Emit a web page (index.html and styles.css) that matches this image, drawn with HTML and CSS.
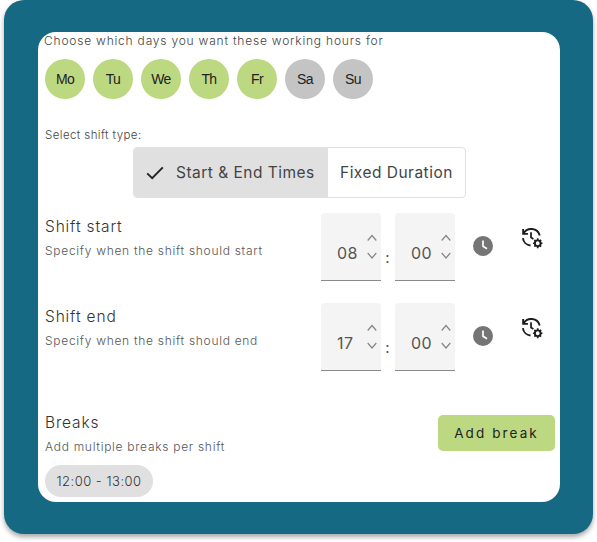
FILE: index.html
```html
<!DOCTYPE html>
<html lang="en">
<head>
<meta charset="utf-8">
<title>Working hours</title>
<link rel="stylesheet" href="styles.css">
</head>
<body>
<main class="panel">
  <section class="card">
    <p class="lead">Choose which days you want these working hours for</p>
    <div class="days">
      <span class="day on">Mo</span><span class="day on">Tu</span><span class="day on">We</span><span class="day on">Th</span><span class="day on">Fr</span><span class="day">Sa</span><span class="day">Su</span>
    </div>
    <p class="label">Select shift type:</p>
    <div class="toggle-wrap">
      <div class="toggle">
        <div class="opt sel">
          <svg class="check" viewBox="0 0 18 14" width="18" height="14"><path d="M1.2 7.4 6.2 12.2 16.8 1.4" fill="none" stroke="#222" stroke-width="1.9"/></svg>
          <span>Start &amp; End Times</span>
        </div>
        <div class="opt">Fixed Duration</div>
      </div>
    </div>
    <div class="shift first">
      <div class="shift-text">
        <h2>Shift start</h2>
        <p class="sub">Specify when the shift should start</p>
      </div>
      <div class="time">
        <div class="field"><span class="val">08</span><span class="spin"><svg viewBox="0 0 10 26" width="10" height="26"><path d="M.7 6.5 5 1.5 9.3 6.5M.7 19 5 24 9.3 19" fill="none" stroke="#858585" stroke-width="1.2"/></svg></span></div>
        <span class="colon">:</span>
        <div class="field"><span class="val">00</span><span class="spin"><svg viewBox="0 0 10 26" width="10" height="26"><path d="M.7 6.5 5 1.5 9.3 6.5M.7 19 5 24 9.3 19" fill="none" stroke="#858585" stroke-width="1.2"/></svg></span></div>
      </div>
      <svg class="clock" viewBox="0 0 20 20" width="20" height="20"><circle cx="10" cy="10" r="10" fill="#757575"/><path d="M10 4.5V10.3L14 12.8" fill="none" stroke="#fff" stroke-width="1.7"/></svg>
      <svg class="hist" viewBox="0 0 24 24" width="23" height="23"><path d="M3.3 3.2V8.2H8.3M3.6 8A9.2 9.2 0 0 1 20.6 9.8M3 12.6A9.2 9.2 0 0 0 11 20.4" fill="none" stroke="#1c1c1c" stroke-width="2"/><path d="M11.5 6.5V12L14 13.5" fill="none" stroke="#1c1c1c" stroke-width="1.8"/><circle cx="18.5" cy="18" r="3" fill="none" stroke="#1c1c1c" stroke-width="2"/><path d="M18.5 12.8V15M18.5 21V23.2M13.6 18H15.5M21.5 18H23.4M15 14.5 16.4 15.9M20.6 20.1 22 21.5M22 14.5 20.6 15.9M16.4 20.1 15 21.5" stroke="#1c1c1c" stroke-width="1.8"/></svg>
    </div>
    <div class="shift">
      <div class="shift-text">
        <h2>Shift end</h2>
        <p class="sub">Specify when the shift should end</p>
      </div>
      <div class="time">
        <div class="field"><span class="val">17</span><span class="spin"><svg viewBox="0 0 10 26" width="10" height="26"><path d="M.7 6.5 5 1.5 9.3 6.5M.7 19 5 24 9.3 19" fill="none" stroke="#858585" stroke-width="1.2"/></svg></span></div>
        <span class="colon">:</span>
        <div class="field"><span class="val">00</span><span class="spin"><svg viewBox="0 0 10 26" width="10" height="26"><path d="M.7 6.5 5 1.5 9.3 6.5M.7 19 5 24 9.3 19" fill="none" stroke="#858585" stroke-width="1.2"/></svg></span></div>
      </div>
      <svg class="clock" viewBox="0 0 20 20" width="20" height="20"><circle cx="10" cy="10" r="10" fill="#757575"/><path d="M10 4.5V10.3L14 12.8" fill="none" stroke="#fff" stroke-width="1.7"/></svg>
      <svg class="hist" viewBox="0 0 24 24" width="23" height="23"><path d="M3.3 3.2V8.2H8.3M3.6 8A9.2 9.2 0 0 1 20.6 9.8M3 12.6A9.2 9.2 0 0 0 11 20.4" fill="none" stroke="#1c1c1c" stroke-width="2"/><path d="M11.5 6.5V12L14 13.5" fill="none" stroke="#1c1c1c" stroke-width="1.8"/><circle cx="18.5" cy="18" r="3" fill="none" stroke="#1c1c1c" stroke-width="2"/><path d="M18.5 12.8V15M18.5 21V23.2M13.6 18H15.5M21.5 18H23.4M15 14.5 16.4 15.9M20.6 20.1 22 21.5M22 14.5 20.6 15.9M16.4 20.1 15 21.5" stroke="#1c1c1c" stroke-width="1.8"/></svg>
    </div>
    <div class="breaks">
      <div class="breaks-text">
        <h2>Breaks</h2>
        <p class="sub">Add multiple breaks per shift</p>
      </div>
      <button class="add" type="button">Add break</button>
    </div>
    <div class="chip">12:00 - 13:00</div>
  </section>
</main>
</body>
</html>
```
FILE: styles.css
```css
* { box-sizing: border-box; }
html, body { margin: 0; background: #fff; }
body { height: 542px; overflow: hidden; font-family: "Inter", "Liberation Sans", sans-serif; color: #333; }
.panel {
  width: 589px; height: 534px; margin-left: 4px;
  padding: 32px 33px 32px 34px;
  background: #156982; border-radius: 20px;
  box-shadow: 0 3px 5px rgba(0,0,0,.35);
}
.card {
  height: 470px; background: #fff; border-radius: 18px;
  padding: 0 5px 0 7px; display: flex; flex-direction: column;
}
p, h2 { margin: 0; font-weight: 300; }
.lead { font-size: 12px; line-height: 18px; letter-spacing: .79px; color: #444; margin-left: -1px; }
.days { display: flex; gap: 8px; margin-top: 9px; }
.day {
  width: 40px; height: 40px; border-radius: 50%; background: #c4c4c4;
  display: flex; align-items: center; justify-content: center;
  font: 14px "Liberation Sans", sans-serif; letter-spacing: -.6px; color: #222;
}
.day.on { background: #bcd981; }
.label { font-size: 11.5px; line-height: 16px; letter-spacing: .42px; margin-top: 28px; color: #444; }
.toggle-wrap { display: flex; margin: 4px 0 0 88px; }
.toggle {
  width: 333px; height: 51px; display: flex; border: 1px solid #e0e0e0; border-radius: 4px; overflow: hidden;
  font-size: 15.5px; letter-spacing: .48px; color: #444;
}
.opt { display: flex; align-items: center; padding-left: 12px; flex: 1; }
.opt.sel { flex: 0 0 194px; background: #e0e0e0; gap: 12px; padding-left: 12px; }
.check { flex: none; }
.shift { display: flex; align-items: flex-start; height: 68px; margin-top: 22px; }
.shift.first { margin-top: 15px; }
.shift-text { width: 276px; padding-top: 3px; }
h2 { font-size: 15.5px; line-height: 22px; color: #333; letter-spacing: .85px; }
.sub { font-size: 12px; line-height: 18px; letter-spacing: .71px; color: #555; margin-top: 4px; }
.time { display: flex; align-items: flex-start; }
.field {
  width: 60px; height: 68px; background: #f4f4f4; border-bottom: 1px solid #8a8a8a; border-radius: 4px 4px 0 0;
  display: flex; justify-content: space-between; font-size: 16px; letter-spacing: .5px; color: #555;
}
.val { padding: 30px 0 0 16px; line-height: 20px; }
.spin { padding: 21px 4px 0 0; display: block; line-height: 0; }
.colon { width: 14px; padding: 35px 1px 0 0; text-align: center; font-size: 15px; line-height: 20px; color: #555; }
.clock { margin: 23px 0 0 17.5px; flex: none; }
.hist { margin: 13px 0 0 27.5px; flex: none; }
.breaks { display: flex; justify-content: space-between; margin-top: 33px; align-items: flex-start; }
.breaks-text { padding-top: 8px; }
.add {
  width: 117px; height: 36px; margin: 11px 0 0; background: #bcd981; border: 0; border-radius: 5px;
  font: 400 13.5px "Inter", sans-serif; letter-spacing: 2.1px; color: #222;
}
.chip {
  width: 108px; height: 32px; margin-top: 9px; border-radius: 16px; background: #e0e0e0;
  display: flex; align-items: center; justify-content: center;
  font-size: 13px; font-weight: 300; letter-spacing: .5px; color: #333;
}
```
